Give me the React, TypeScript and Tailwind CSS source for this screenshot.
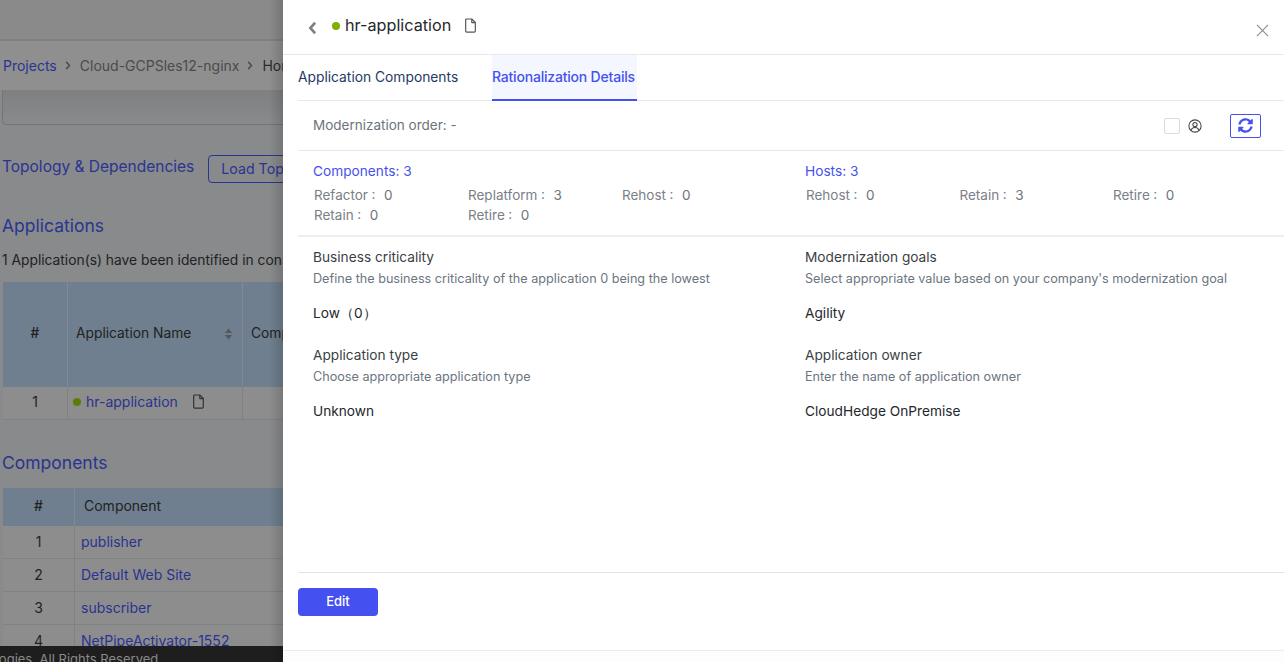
import React from "react";

function FileIcon({ className }: { className: string }) {
  return (
    <svg viewBox="0 0 12 14" fill="none" stroke="currentColor" strokeWidth="1.1" strokeLinejoin="round" className={className}>
      <path d="M1.5 1.9a1 1 0 0 1 1-1h4.7l3.3 3.3v7.9a1 1 0 0 1-1 1h-7a1 1 0 0 1-1-1z" />
      <path d="M7.2 1v3.3h3.3" />
    </svg>
  );
}

function Crumb() {
  return (
    <svg viewBox="0 0 6 10" className="mx-[8px] w-[6px] h-[9px] text-[#4f4f4f]" fill="none" stroke="currentColor" strokeWidth="1.8">
      <path d="M1 1l3.6 4L1 9" />
    </svg>
  );
}

function Stat({ label, value, w = "w-[154px]" }: { label: string; value: string; w?: string }) {
  return (
    <div className={`${w} h-5 flex items-center text-[#7b8086] text-[13.5px]`}>
      <span>{label}</span>
      <span className="w-[11px] text-center -mt-px">:</span>
      <span className="ml-[5px] text-[#6e747a]">{value}</span>
    </div>
  );
}

function Field({ title, help, value, h }: { title: string; help: string; value: string; h: string }) {
  return (
    <div className={h}>
      <div className="text-[13.7px] leading-5 text-[#3b3f44]">{title}</div>
      <div className="mt-[1px] text-[12.65px] leading-[22px] text-[#6b7580] whitespace-nowrap">{help}</div>
      <div className="mt-[13px] text-[13.7px] leading-5 text-[#24272b]">{value}</div>
    </div>
  );
}

function AppRow({ n, name }: { n: string; name: string }) {
  return (
    <div className="flex h-[33px] border-b border-[#7f8183] bg-[#8d8d8e] w-[400px] text-[14px]">
      <div className="w-[72px] border-r border-[#7f8183] pb-[2px] flex items-center justify-center text-[#222]">{n}</div>
      <div className="pl-[6px] pb-[2px] flex items-center text-[#2a3390] whitespace-nowrap">{name}</div>
    </div>
  );
}

export default function App() {
  return (
    <div className="relative w-[1284px] h-[662px] overflow-hidden bg-white font-['Inter','Noto_Sans',sans-serif]">
      {/* Page dimmed behind the drawer */}
      <div className="w-[283px] h-[662px] overflow-hidden bg-[#888a8c] flex flex-col relative">
        <div className="h-[41px] shrink-0 bg-[#8a8a8a] border-b-2 border-[#808080]" />
        <div className="h-[49px] shrink-0 bg-[#8f8f8f] flex items-center pl-[3px] text-[14px] whitespace-nowrap w-[400px]">
          <span className="text-[#2b3490]">Projects</span>
          <Crumb />
          <span className="ml-px text-[#4b4b4b]">Cloud-GCPSles12-nginx</span>
          <Crumb />
          <span className="ml-px text-[#2b2b2b]">Home</span>
        </div>
        <div className="h-[35px] shrink-0 ml-[2px] w-[400px] border border-[#747474] border-t-0 rounded-bl-[4px] bg-gradient-to-b from-[#7f8082] to-[#898a8c]" />
        <div className="mt-[30px] h-[28px] shrink-0 flex pl-[2px] w-[500px]">
          <span className="text-[#2b3490] text-[15.5px] leading-[24px] whitespace-nowrap">Topology &amp; Dependencies</span>
          <span className="ml-[14px] h-[28px] w-[150px] border border-[#2b3490] rounded-[4px] flex items-center pl-[12px] text-[14.2px] text-[#2b3490] whitespace-nowrap">Load Topology</span>
        </div>
        <div className="mt-[31px] h-[24px] shrink-0 flex items-center pl-[2px] text-[#2b3490] text-[17.5px]">Applications</div>
        <div className="mt-[11px] h-[22px] shrink-0 flex items-center pl-[2px] text-[13.8px] text-[#222] whitespace-nowrap w-[600px]">1 Application(s) have been identified in consideration</div>
        <div className="mt-[11px] ml-[3px] shrink-0 w-[400px]">
          <div className="flex h-[105px] bg-[#6f7f8f] text-[13.8px] text-[#222] pb-[1px]">
            <div className="w-[65px] border-r border-[#7f8a93] pb-[1px] flex items-center justify-center font-medium">#</div>
            <div className="w-[175px] border-r border-[#7f8a93] flex items-center pl-[8px] pr-[9px] pb-[1px] justify-between whitespace-nowrap">
              <span>Application Name</span>
              <svg viewBox="0 0 10 14" className="w-[9px] h-[14px] text-[#55595e]" fill="currentColor">
                <path d="M5 1l4 5H1zM5 13l4-5H1z" />
              </svg>
            </div>
            <div className="pl-[8px] pb-[1px] flex items-center">Components</div>
          </div>
          <div className="flex h-[33px] border-b border-[#7f8183] bg-[#8d8d8e] text-[14px]">
            <div className="w-[65px] border-r border-[#7f8183] pb-[3px] flex items-center justify-center text-[#222]">1</div>
            <div className="w-[175px] border-r border-[#7f8183] pb-[3px] flex items-center pl-[5px] text-[#2a3390] whitespace-nowrap">
              <span className="w-[8px] h-[8px] rounded-full bg-[#5b7d06] mr-[5px]" />
              hr-application
              <FileIcon className="w-[13px] h-[15px] ml-[14px] text-[#333]" />
            </div>
          </div>
        </div>
        <div className="mt-[31px] h-[24px] shrink-0 flex items-center pl-[2px] text-[#2b3490] text-[17.5px]">Components</div>
        <div className="mt-[13px] ml-[3px] shrink-0 w-[400px]">
          <div className="flex h-[38px] bg-[#6f7f8f] text-[14px] text-[#222]">
            <div className="w-[72px] border-r border-[#7f8a93] pb-[3px] flex items-center justify-center font-medium">#</div>
            <div className="pl-[9px] pb-[3px] flex items-center">Component</div>
          </div>
          <AppRow n="1" name="publisher" />
          <AppRow n="2" name="Default Web Site" />
          <AppRow n="3" name="subscriber" />
          <AppRow n="4" name="NetPipeActivator-1552" />
        </div>
        <div className="absolute left-0 right-0 bottom-0 h-[16px] bg-[#1e1e1e] overflow-hidden flex items-start justify-end pr-[121px] pt-[4px] text-[13px] leading-[18px] text-[#8a8a8a] whitespace-nowrap">
          Technologies. All Rights Reserved.
        </div>
        <div className="absolute top-0 bottom-0 right-0 w-[14px] bg-gradient-to-r from-transparent to-black/15" />
      </div>

      {/* Drawer */}
      <div className="absolute top-0 left-[283px] right-0 bottom-0 bg-white flex flex-col">
        <div className="h-[55px] shrink-0 border-b border-[#e8e8e8] flex items-center relative pl-[25px] pb-[3px]">
          <svg viewBox="0 0 10 16" className="w-[9px] h-[14px] text-[#808080] mt-[5px]" fill="none" stroke="currentColor" strokeWidth="3">
            <path d="M8 2L2.5 8 8 14" />
          </svg>
          <span className="ml-[15px] w-[8px] h-[8px] rounded-full bg-[#7fb000]" />
          <span className="ml-[5px] text-[16.2px] text-[#24272b]">hr-application</span>
          <FileIcon className="ml-[13px] w-[13px] h-[15px] text-[#555]" />
          <svg viewBox="0 0 14 14" className="absolute right-[15px] top-[24px] w-[13px] h-[13px] text-[#8c8c8c]" fill="none" stroke="currentColor" strokeWidth="1.2">
            <path d="M1 1l12 12M13 1L1 13" />
          </svg>
        </div>
        <div className="ml-[15px] flex-1 flex flex-col">
          <div className="h-[46px] shrink-0 border-b border-[#e8e8e8] flex text-[13.8px]">
            <div className="w-[194px] pb-[1px] flex items-center text-[#1f3a63] whitespace-nowrap">Application Components</div>
            <div className="w-[145px] bg-[#f4f7ff] border-b-2 border-[#4451f0] -mb-px pb-[1px] flex items-center text-[#4451f0] font-medium whitespace-nowrap text-[14px] tracking-[-0.2px]">Rationalization Details</div>
          </div>
          <div className="h-[50px] shrink-0 border-b border-[#e8e8e8] flex items-center pl-[15px] text-[13.5px] text-[#6d747b]">
            <span>Modernization order: -</span>
            <div className="ml-auto flex items-center pr-[23px]">
              <span className="w-[16px] h-[16px] border border-[#dcdcdc] rounded-[2px]" />
              <svg viewBox="0 0 16 16" className="ml-[8px] w-[14px] h-[14px] text-[#444]" fill="none" stroke="currentColor" strokeWidth="1.2">
                <circle cx="8" cy="8" r="7" />
                <circle cx="8" cy="6.3" r="2.4" />
                <path d="M3.6 13c.6-2.4 2.3-3.3 4.4-3.3s3.8.9 4.4 3.3" />
              </svg>
              <span className="ml-[28px] w-[31px] h-[24px] border border-[#4451f0] rounded-[2px] flex items-center justify-center">
                <svg viewBox="0 0 512 512" className="w-[15px] h-[15px] text-[#4451f0]" fill="currentColor">
                  <path d="M370.72 133.28C339.458 104.008 298.888 87.962 255.848 88c-77.458.068-144.328 53.178-162.791 126.85-1.344 5.363-6.122 9.15-11.651 9.15H24.103c-7.498 0-13.194-6.807-11.807-14.176C33.933 94.924 134.813 8 256 8c66.448 0 126.791 26.136 171.315 68.685L463.03 40.97C478.149 25.851 504 36.559 504 57.941V192c0 13.255-10.745 24-24 24H345.941c-21.382 0-32.09-25.851-16.971-40.971l41.75-41.749zM32 296h134.059c21.382 0 32.09 25.851 16.971 40.971l-41.75 41.75c31.262 29.273 71.835 45.319 114.876 45.28 77.418-.07 144.315-53.144 162.787-126.849 1.344-5.363 6.122-9.15 11.651-9.15h57.304c7.498 0 13.194 6.807 11.807 14.176C478.067 417.076 377.187 504 256 504c-66.448 0-126.791-26.136-171.315-68.685L48.97 471.03C33.851 486.149 8 475.441 8 454.059V320c0-13.255 10.745-24 24-24z" />
                </svg>
              </span>
            </div>
          </div>
          <div className="h-[86px] shrink-0 border-b-2 border-[#eeeeee] flex pt-[10px] pl-[15px]">
            <div className="w-[492px]">
              <div className="text-[13.7px] leading-5 text-[#4451f0]">Components: 3</div>
              <div className="mt-[4px] pl-[1px] flex flex-wrap">
                <Stat label="Refactor" value="0" />
                <Stat label="Replatform" value="3" />
                <Stat label="Rehost" value="0" />
                <Stat label="Retain" value="0" />
                <Stat label="Retire" value="0" />
              </div>
            </div>
            <div className="flex-1">
              <div className="text-[13.7px] leading-5 text-[#4451f0]">Hosts: 3</div>
              <div className="mt-[4px] pl-[1px] flex flex-wrap">
                <Stat label="Rehost" value="0" w="w-[153.5px]" />
                <Stat label="Retain" value="3" w="w-[153.5px]" />
                <Stat label="Retire" value="0" w="w-[153.5px]" />
              </div>
            </div>
          </div>
          <div className="flex-1 pl-[15px] pt-[10px] grid grid-cols-[492px_1fr] content-start">
            <Field h="h-[98px]" title="Business criticality" help="Define the business criticality of the application 0 being the lowest" value="Low（0）" />
            <Field h="h-[98px]" title="Modernization goals" help="Select appropriate value based on your company's modernization goal" value="Agility" />
            <Field h="h-[98px]" title="Application type" help="Choose appropriate application type" value="Unknown" />
            <Field h="h-[98px]" title="Application owner" help="Enter the name of application owner" value="CloudHedge OnPremise" />
          </div>
          <div className="h-[78px] shrink-0 border-t border-[#e4e4e4] pt-[15px]">
            <button className="w-[80px] h-[28px] rounded-[4px] bg-[#4451f0] text-white text-[13px] font-medium">Edit</button>
          </div>
        </div>
        <div className="h-[12px] shrink-0 border-t border-[#ececec] bg-[#fdfdfd]" />
      </div>
    </div>
  );
}
